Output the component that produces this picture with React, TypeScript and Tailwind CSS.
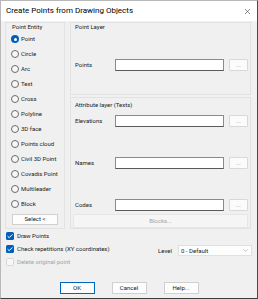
import { ChevronDown, X } from 'lucide-react';

const entities = [
  'Point',
  'Circle',
  'Arc',
  'Text',
  'Cross',
  'Polyline',
  '3D face',
  'Points cloud',
  'Civil 3D Point',
  'Covadis Point',
  'Multileader',
  'Block',
];

function Radio({ label, checked }: { label: string; checked?: boolean }) {
  return (
    <div className="flex h-[15px] items-center gap-[2px]">
      {checked ? (
        <span className="flex h-[8px] w-[8px] items-center justify-center rounded-full bg-[#005fb8]">
          <span className="h-[3px] w-[3px] rounded-full bg-white" />
        </span>
      ) : (
        <span className="h-[8px] w-[8px] rounded-full border border-[#6b6b6b] bg-[#f7f7f7]" />
      )}
      <span>{label}</span>
    </div>
  );
}

function Check({ label, checked, disabled }: { label: string; checked?: boolean; disabled?: boolean }) {
  return (
    <div className="flex h-[13px] items-center gap-[3px]">
      {checked ? (
        <span className="flex h-[8px] w-[8px] items-center justify-center rounded-[1.5px] bg-[#005fb8]">
          <svg viewBox="0 0 8 8" className="h-[8px] w-[8px]">
            <path d="M1.6 4.2 3.2 5.7 6.4 2.4" fill="none" stroke="white" strokeWidth="1" />
          </svg>
        </span>
      ) : (
        <span className="h-[8px] w-[8px] rounded-[1.5px] border border-[#d6d6d6] bg-[#f7f7f7]" />
      )}
      <span className={disabled ? 'text-[#a3a3a3]' : ''}>{label}</span>
    </div>
  );
}

function FieldRow({ label }: { label: string }) {
  return (
    <div className="flex h-[12px] items-center">
      <span className="w-[42px] pl-[2px]">{label}</span>
      <div className="h-[12px] w-[109px] border border-[#8a8a8a] border-b-[#5a5a5a] bg-white" />
      <div className="ml-[5px] flex h-[12px] w-[19px] items-center justify-center rounded-[1px] border border-[#d8d8d8] bg-[#fbfbfb] text-[#8a8a8a]">
        ...
      </div>
    </div>
  );
}

export default function App() {
  return (
    <div
      className="flex h-[299px] w-[258px] flex-col whitespace-nowrap border border-[#b8b8b8] border-b-[#3c3c3c] border-r-[#4a4a4a] bg-[#f0f0f0] text-[6px] leading-none text-[#222]"
      style={{ fontFamily: 'Roboto, "Noto Sans", sans-serif' }}
    >
      <div className="flex h-[20px] shrink-0 items-center justify-between bg-white pl-[5px] pr-[5px]">
        <span className="text-[8px] text-black">Create Points from Drawing Objects</span>
        <X className="h-[9px] w-[9px] text-[#333]" strokeWidth={1.5} />
      </div>

      <div className="flex flex-1 flex-col px-[4px] pt-[1px]">
        <div className="flex h-[207px] gap-[5px]">
          <div className="flex w-[60px] flex-col border border-[#e2e2e2] pl-[5px]">
            <span className="flex h-[7px] items-center pl-[1px]">Point Entity</span>
            <div className="mt-[1.5px] flex flex-col">
              {entities.map((e, i) => (
                <Radio key={e} label={e} checked={i === 0} />
              ))}
            </div>
            <div className="ml-[1px] mt-[2px] flex h-[11px] w-[46px] items-center justify-center border border-[#d0d0d0] bg-[#fdfdfd]">
              Select &lt;
            </div>
          </div>

          <div className="flex flex-1 flex-col gap-[2px] pr-[2px]">
            <div className="flex h-[73px] flex-col border border-[#e2e2e2] pl-[2px]">
              <span className="flex h-[7px] items-center pl-[2px]">Point Layer</span>
              <div className="mt-[29px]">
                <FieldRow label="Points" />
              </div>
            </div>
            <div className="flex flex-1 flex-col border border-[#e2e2e2] pl-[2px] pt-[3.5px]">
              <span className="flex h-[7px] items-center pl-[2px]">Attribute layer (Texts)</span>
              <div className="mt-[6.5px]">
                <FieldRow label="Elevations" />
              </div>
              <div className="mt-[30px]">
                <FieldRow label="Names" />
              </div>
              <div className="mt-[30px]">
                <FieldRow label="Codes" />
              </div>
              <div className="mr-[2px] mt-[3px] flex h-[14px] items-center justify-center border border-[#e6e6e6] bg-[#f5f5f5] text-[#a3a3a3]">
                Blocks...
              </div>
            </div>
          </div>
        </div>

        <div className="flex">
          <div className="flex flex-col pl-[1px]">
            <Check label="Draw Points" checked />
            <Check label="Check repetitions (XY coordinates)" checked />
            <Check label="Delete original point" disabled />
          </div>
          <div className="ml-auto mt-[16px] flex h-[11px] items-center pr-[1px]">
            <span className="mr-[6px]">Level</span>
            <div className="flex h-[11px] w-[74px] items-center justify-between border border-[#e0e0e0] bg-[#fdfdfd] pl-[2px] pr-[2px]">
              <span>0 - Default</span>
              <ChevronDown className="h-[7px] w-[7px] text-[#777]" strokeWidth={1.5} />
            </div>
          </div>
        </div>

        <div className="mt-[14px] flex justify-center gap-[17px]">
          <div className="flex h-[12px] w-[35px] items-center justify-center border border-[#0067c0] bg-[#fdfdfd]">OK</div>
          <div className="flex h-[12px] w-[35px] items-center justify-center border border-[#d0d0d0] bg-[#fdfdfd]">Cancel</div>
          <div className="flex h-[12px] w-[35px] items-center justify-center border border-[#d0d0d0] bg-[#fdfdfd]">Help...</div>
        </div>
      </div>
    </div>
  );
}
